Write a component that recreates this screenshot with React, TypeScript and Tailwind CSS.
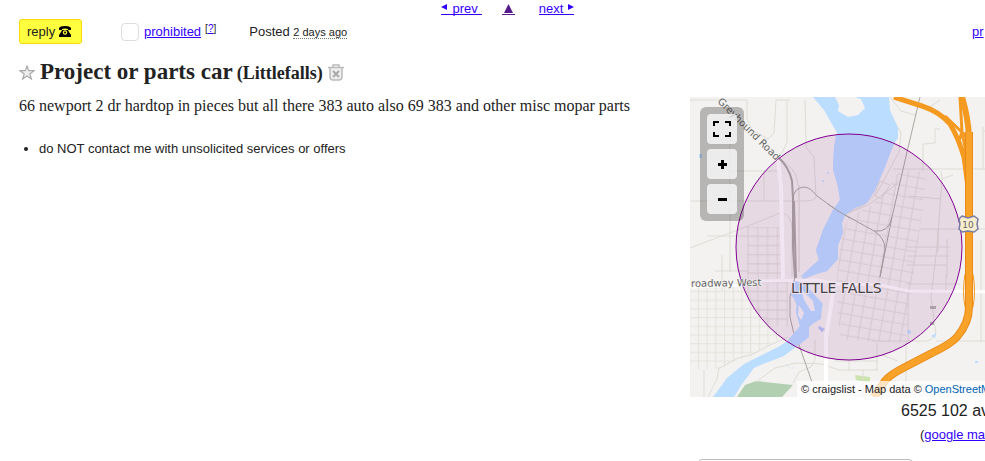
const link = "text-[#3300ff] underline";
const pageLink = "flex h-[15px] items-center border-b border-[#3300ff] pt-[3px] text-[#3300ff]";

function TownMap() {
  return (
    <svg
      className="block h-[300px] w-[318px]"
      viewBox="0 0 318 300"
      fill="none"
      role="img"
      aria-label="Map of Little Falls"
    >
      <defs>
        <pattern id="east" width="10.5" height="10.5" patternUnits="userSpaceOnUse" patternTransform="rotate(10 150 150)">
          <path d="M5 0V10.5M0 5H10.5" stroke="#dfddd7" strokeWidth="1" />
        </pattern>
        <pattern id="west" x="53" y="144" width="9.8" height="9.2" patternUnits="userSpaceOnUse">
          <path d="M5 0V9.2M0 4.5H9.8" stroke="#dfddd7" strokeWidth="1" />
        </pattern>
        <pattern id="south" x="4" y="190" width="8.7" height="8.7" patternUnits="userSpaceOnUse">
          <path d="M4.500 0V8.7M0 4.500H8.7" stroke="#e3e2da" strokeWidth="1" />
        </pattern>
      </defs>
      <rect width="318" height="300" fill="#f3f2f0" />

      {/* parks */}
      <path d="M47 300L55 288L66 284L103 288L92 300Z" fill="#b3cfb2" />
      <path d="M165 278L180 280V286L166 283Z" fill="#cbe3ae" />

      {/* street grids */}
      <path d="M211 72L237 76L215 246L150 243L146 190L151 138L160 118L180 110L197 92Z" fill="url(#east)" />
      <path d="M57 130L91 130V182L57 182Z" fill="url(#west)" />
      <path d="M52 184H98V230L78 230L60 204Z" fill="url(#west)" />
      <path d="M0 190H56L80 225L92 240L64 258L50 262L28 272L0 272Z" fill="url(#south)" />

      {/* minor streets */}
      <g stroke="#dedcd5" strokeWidth="1">
        <path d="M0 3H57V22L62 33L78 42L84 36L86 3H100M115 3L116 50L124 60L126 100Q124 104 115 104H0" />
        <path d="M97 3V45L92 56M38 74H88M40 35V175M74 74V104M109 88V175" />
        <path d="M91 62L102 72Q109 80 109 100V175M92 116Q102 118 102 132V180M17 139H57M0 151L58 129L90 116" />
        <path d="M32 158V194M25 174H58M14 273V300M29 270L27 282L18 300M28 272L48 261L61 258L78 249L98 240" />
        <path d="M202 20L211 36L209 55L187 96L175 107L157 117M200 0L211 14L226 18M250 3L240 10M250 32H245V46L233 47V74M203 72H318M251 74L252 82L263 78M252 82L247 150L241 200L246 237Q244 242 237 244H182" />
        <path d="M219 99L251 102M230 132H318M248 132V155M257 142V180M217 150H260M217 159H260M217 168H256M217 187H270M218 195V244M256 177V194M293 30V72M293 33L300 38M291 143V245M246 244H318" />
        <path d="M66 285L85 271L106 266L132 267L149 273H188M125 243V263L121 270L109 275L103 286M145 264H188M159 264V274M187 246V274M216 244V300M192 258L208 264M173 273V300" />
        <path d="M190 84L200 88L191 102L184 98ZM158 116L178 108L198 94L212 82" />
      </g>

      {/* water */}
      <path
        fill="#bbddff"
        d="M123 0H199L200 13L208 31L208 41L202 50L195 70L185 93L177 106L165 111L155 118L152 126L153 136L148 148L148 162L137 174L124 178L112 183L106 190L104 202L107 209L106 215L110 229L102 241L90 249L72 258L54 267L37 281L23 300H44L52 287L64 271L73 267L94 259L107 249L118 240L119 230L124 226L131 222L132 208L125 200L116 192L110 185L114 178L121 170L129 163L126 153L129 145L133 133L143 113L150 103L148 90L143 72L144 50L147 36L134 13Z"
      />
      <path d="M145 0L149 8L148 14L158 20L168 18L175 11L171 2L165 0Z" fill="#f3f2f0" />
      <path d="M129 229L135 232L132 235L128 231Z" fill="#b4c6f6" />
      <g fill="#bbddff">
        <circle cx="138" cy="76" r="1" />
        <circle cx="133" cy="84" r="1" />
        <circle cx="219" cy="235" r="2" />
        <path d="M241 239L246 236L245 241ZM9 57H12V61H9ZM285 264H288V266H285Z" />
      </g>
      <path d="M96 267L99 271H104" stroke="#bbddff" strokeDasharray="1 2" />

      {/* main streets */}
      <g stroke="#fff">
        <path d="M88 62L91 90L93 182" strokeWidth="4" />
        <path d="M0 190L50 188L72 184L127 183L148 187L190 188L218 194L318 195" strokeWidth="3" />
        <path d="M144 190L136 240V300" strokeWidth="4" />
      </g>

      {/* railways */}
      <g stroke="#aaa7a1">
        <path d="M88 60Q99 70 102 84L103 102V150L105 181" strokeWidth="2" />
        <path d="M104 104L106 181" strokeWidth="2" />
        <path d="M103 103Q103 91 114 90Q120 90 127 99L138 107L148 114L184 134Q195 141 195 152L190 180M230 0L217 55L202 120L190 180M202 120Q199 136 184 134M105 180L100 200V220Q102 234 109 248L122 285" />
      </g>
      <g fill="#b4b2af">
        <rect x="240" y="209" width="6" height="3" />
        <rect x="240" y="225" width="4" height="3" />
      </g>

      {/* highway */}
      <g stroke="#f59a20">
        <path d="M204 0L232 9Q250 15 260 27Q268 40 274 60L278 90" strokeWidth="5" />
        <path d="M270 0L272 35L269 44M255 19L278 41M262 31L279 67M272 35L278 65" strokeWidth="3" />
        <path d="M272 0Q278 20 279 40V90" strokeWidth="6" />
        <path d="M279 35V210Q279 226 267 240Q261 247 242 256L217 269Q199 278 195 284L184 300" stroke="#e98a18" strokeWidth="8" />
        <path d="M279 35V210Q279 226 267 240Q261 247 242 256L217 269Q199 278 195 284L184 300" stroke="#f9a22a" strokeWidth="6" />
        <path d="M275 177Q272 195 275 210M283 177Q286 195 283 210" />
      </g>

      <circle cx="159" cy="150" r="113" fill="#800080" fillOpacity=".1" />
      <path
        d="M146 38Q175 33 204 47L195 70L185 93L177 106L165 111L155 118L152 126L153 136L148 148L148 162L137 174L110 180L121 170L129 163L126 153L133 133L143 113L150 103L148 90L143 72L144 50Z"
        fill="#b4c6f6"
      />
      <path d="M103 184L113 185L133 207L130 219L119 228V240L109 248L98 243L110 229L106 215L107 205L101 198Z" fill="#b4c6f6" />
      <path d="M111 192L123 204L125 214L121 214L114 203ZM109 208L114 216L111 223L108 218Z" fill="#e9dbe8" />
      <path d="M138 107L148 114L160 121" stroke="#9c9ba5" />
      <circle cx="159" cy="150" r="113" stroke="#800090" />

      <path
        d="M272 119L278 121L284 119L288 122L287 127L288 132L284 135L278 134L272 135L269 132L270 127L269 122Z"
        fill="#f8edcf"
        stroke="#777da5"
        strokeWidth="1.5"
      />
      <g fontFamily="'DejaVu Sans', sans-serif" fill="#666">
        <text x="278" y="131" fontSize="9" textAnchor="middle">10</text>
        <g stroke="#f5f4f2" strokeWidth="1" paintOrder="stroke">
          <text transform="translate(27 5) rotate(45)" fontSize="10">Greyhound Road</text>
          <text x="1" y="190" fontSize="10" transform="rotate(-1 1 190)">roadway West</text>
        </g>
        <text x="101" y="196" fontSize="14" fill="#444" stroke="#eee1ee" strokeWidth="2" paintOrder="stroke">
          LITTLE FALLS
        </text>
      </g>
    </svg>
  );
}

const mapButton = "flex h-[30px] w-[30px] items-center justify-center rounded bg-white/75";

function MapControls() {
  return (
    <div className="absolute top-[10px] left-[10px] flex flex-col gap-[5px] rounded-md bg-black/25 p-[7px]">
      <button type="button" aria-label="Full screen" className={mapButton}>
        <svg width="18" height="16" viewBox="0 0 18 16" fill="none" stroke="#000" strokeWidth="2">
          <path d="M1 5V1H6M12 1H17V5M17 11V15H12M6 15H1V11" />
        </svg>
      </button>
      <button type="button" aria-label="Zoom in" className={mapButton}>
        <svg width="9" height="9" viewBox="0 0 9 9" stroke="#000" strokeWidth="3">
          <path d="M0 4.5H9M4.5 0V9" />
        </svg>
      </button>
      <button type="button" aria-label="Zoom out" className={mapButton}>
        <svg width="9" height="3" viewBox="0 0 9 3">
          <path d="M0 0H9V3H0Z" />
        </svg>
      </button>
    </div>
  );
}

export default function App() {
  return (
    <div className="h-screen overflow-hidden bg-white font-['Liberation_Sans',Arial,sans-serif] text-[13px] text-[#222]">
      {/* Paging */}
      <nav className="flex h-4 items-start justify-center gap-5 pl-[30px]">
        <a href="#prev" className={`${pageLink} gap-[6px] pr-1`}>
          <svg className="mb-[3px]" width="6" height="6" viewBox="0 0 6 6" fill="currentColor" aria-hidden="true">
            <path d="M6 0V6L0 3Z" />
          </svg>
          prev
        </a>
        <a href="#up" aria-label="Up" className="flex h-[15px] items-center border-b border-[#551a8b] px-[2px] pt-[3px] text-[#551a8b]">
          <svg width="9" height="9" viewBox="0 0 9 9" fill="currentColor">
            <path d="M4.5 0L9 9H0Z" />
          </svg>
        </a>
        <a href="#next" className={`${pageLink} ml-1 gap-[5px]`}>
          next
          <svg className="mb-[3px]" width="6" height="6" viewBox="0 0 6 6" fill="currentColor" aria-hidden="true">
            <path d="M0 0V6L6 3Z" />
          </svg>
        </a>
      </nav>

      {/* Actions */}
      <header className="mt-[3px] flex h-[25px] items-center pl-[19px]">
        <button
          type="button"
          className="flex h-[25px] w-[63px] items-center gap-1 rounded-[3px] border border-[#fcd808] bg-[#ffff40] pl-[7px]"
        >
          reply
          <svg width="12" height="12" viewBox="0 0 12 12" aria-hidden="true">
            <path d="M0 4V2Q1 0 6 0Q11 0 12 2V4H9V3Q6 2 3 3V4Z" />
            <path d="M3 4H9L10 6L12 9V11H0V9L2 6Z" />
            <circle cx="6" cy="6.500" r="2.200" fill="#ffff40" />
            <circle cx="6" cy="6.500" r="1" />
            <path d="M0 7L2 5M12 7L10 5" stroke="#ffff40" />
          </svg>
        </button>
        <input
          id="flag"
          type="checkbox"
          className="ml-[39px] h-[18px] w-[18px] appearance-none rounded border border-[#ddd] bg-white"
        />
        <label htmlFor="flag" className="ml-[5px]">
          <a href="#prohibited" className={link}>prohibited</a>
        </label>
        <span className="ml-1 h-[22px] text-[10px] leading-4">
          [<a href="#help" className={link}>?</a>]
        </span>
        <p className="ml-[33px]">
          Posted <time className="border-b border-dotted border-[#777] text-[11px]">2 days ago</time>
        </p>
        <a href="#print" className={`${link} ml-auto w-[13px] overflow-hidden`}>pr</a>
      </header>

      <h1 className="mt-[13px] flex h-[30px] items-center pl-[19px] font-['Liberation_Serif','Times_New_Roman',serif] text-[23px] font-bold">
        <button type="button" aria-label="Save posting" className="mr-[5px]">
          <svg width="16" height="15" viewBox="0 0 16 15" fill="#eee" stroke="#aaa" strokeWidth="1.2">
            <path d="M8 1L9.700 5.700H15L10.800 8.900L12.400 14L8 10.900L3.600 14L5.200 8.900L1 5.700H6.300Z" />
          </svg>
        </button>
        <span className="leading-[26px]">
          Project or parts car<small className="ml-1 text-[18px]">(Littlefalls)</small>
        </span>
        <button type="button" aria-label="Hide posting" className="ml-[5px]">
          <svg width="16" height="17" viewBox="0 0 16 17" fill="none" stroke="#bbb" strokeWidth="1.500">
            <path d="M2 4V13Q2 16 5 16H11Q14 16 14 13V4" fill="#eee" />
            <path d="M0 3.500H16M5 3V1H11V3" />
            <path d="M5 7L11 13M11 7L5 13" stroke="#aaa" strokeWidth="2" />
          </svg>
        </button>
      </h1>

      <div className="flex items-start pt-[10px]">
        <main className="min-w-0 grow pr-5 pl-[19px]">
          <p className="font-['Liberation_Serif','Times_New_Roman',serif] text-[16px] leading-[18px]">
            66 newport 2 dr hardtop in pieces but all there 383 auto also 69 383 and other misc mopar parts
          </p>
          <ul className="mt-6 list-disc pl-5 leading-5">
            <li>do NOT contact me with unsolicited services or offers</li>
          </ul>
        </main>

        <aside className="w-[295px] shrink-0 overflow-hidden">
          <div className="relative">
            <TownMap />
            <MapControls />
            <p className="absolute right-0 bottom-0 h-4 w-[188px] overflow-hidden bg-white/70 pl-[4px] text-[11px] leading-4 whitespace-nowrap">
              © craigslist - Map data © <a href="#osm" className="text-[#0066b3]">OpenStreetM</a>
            </p>
          </div>
          <p className="mt-1 pl-[211px] text-[16px] leading-5 whitespace-nowrap">6525 102 av</p>
          <p className="mt-1 pl-[230px] leading-5 whitespace-nowrap">
            (<a href="#google" className={link}>google ma</a>
          </p>
          <div className="mt-[14px] ml-[8px] h-10 w-[215px] rounded border border-[#bbb]" />
        </aside>
      </div>
    </div>
  );
}
